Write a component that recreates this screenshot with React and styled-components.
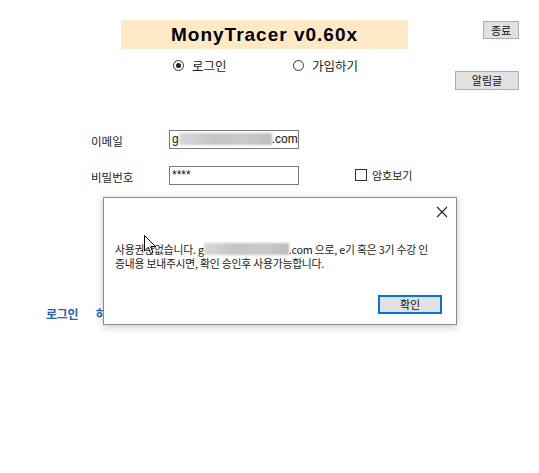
import React from "react";
import styled, { createGlobalStyle } from "styled-components";

const Global = createGlobalStyle`
  html, body { margin: 0; padding: 0; background: #fff; }
  body { font-family: "Noto Sans CJK KR", "Noto Sans", sans-serif; color: #111; }
`;

const Page = styled.div`
  position: relative;
  width: 539px;
  height: 473px;
  overflow: hidden;
  background: #fff;
  display: flex;
  flex-direction: column;
`;

const TopRow = styled.div`
  display: flex;
  align-items: flex-start;
  padding-top: 20px;
  padding-right: 20px;
`;

const TitleBox = styled.div`
  margin-left: 121px;
  width: 287px;
  height: 29px;
  background: #fde9c5;
  display: flex;
  align-items: center;
  justify-content: center;
  font-family: "Liberation Sans", Arial, sans-serif;
  font-weight: bold;
  font-size: 19px;
  color: #000;
  letter-spacing: 1px;
`;

const WinButton = styled.button`
  margin: ${(p) => p.$m || "0"};
  width: ${(p) => p.$w}px;
  height: ${(p) => p.$h}px;
  padding: 0;
  background: #e1e1e1;
  border: 1px solid ${(p) => (p.$focus ? "#0078d7" : "#adadad")};
  box-shadow: ${(p) => (p.$focus ? "inset 0 0 0 1px #0078d7" : "none")};
  font-family: "Noto Sans CJK KR", sans-serif;
  font-size: 11px;
  line-height: 1;
  color: #111;
  display: flex;
  align-items: center;
  justify-content: center;
`;

const RadioRow = styled.div`
  margin-top: 9px;
  height: 14px;
  display: flex;
  align-items: center;
  padding-left: 173px;
  gap: 60px;
`;

const RadioItem = styled.label`
  display: flex;
  align-items: center;
  gap: 8px;
  font-size: 12.5px;
  color: #222;
  width: ${(p) => p.$w}px;
`;

const RadioCircle = styled.span`
  width: 9px;
  height: 9px;
  border: 1px solid #333;
  border-radius: 50%;
  display: flex;
  align-items: center;
  justify-content: center;
  &::after {
    content: "";
    width: 5px;
    height: 5px;
    border-radius: 50%;
    background: ${(p) => (p.$on ? "#222" : "transparent")};
  }
`;

const ButtonRow = styled.div`
  margin-top: -1px;
  display: flex;
  justify-content: flex-end;
  padding-right: 20px;
`;

const FormRow = styled.div`
  display: grid;
  grid-template-columns: 78px 130px 56px auto;
  align-items: center;
  padding-left: 91px;
  margin-top: ${(p) => p.$mt}px;
`;

const Label = styled.span`
  font-size: 11.5px;
  color: #222;
  padding-top: 4px;
`;

const Input = styled.div`
  box-sizing: border-box;
  height: 19px;
  border: 1px solid #7a7a7a;
  background: #fff;
  display: flex;
  align-items: center;
  padding-left: 2px;
  font-family: "Liberation Sans", Arial, sans-serif;
  font-size: 12px;
  color: #111;
  overflow: hidden;
`;

const Blur = styled.span`
  display: inline-block;
  width: ${(p) => p.$w}px;
  height: 12px;
  background: linear-gradient(90deg, #d8d8d8, #c4c4c4 40%, #cacaca 70%, #bdbdbd);
  filter: blur(0.8px);
  flex: none;
`;

const CheckWrap = styled.label`
  grid-column: 4;
  display: flex;
  align-items: center;
  gap: 5px;
  font-size: 11px;
  color: #222;
`;

const CheckBox = styled.span`
  width: 10px;
  height: 10px;
  border: 1px solid #333;
  background: #fff;
`;

const Empty = styled.span``;

const BlueText = styled.div`
  margin-top: 120px;
  padding-left: 46px;
  font-size: 12px;
  font-weight: bold;
  color: #1d63ad;
  letter-spacing: -0.3px;
  word-spacing: 15px;
`;

const Dialog = styled.div`
  position: absolute;
  left: 103px;
  top: 197px;
  width: 354px;
  height: 128px;
  box-sizing: border-box;
  background: #fff;
  border: 1px solid #8a8a8a;
  box-shadow: 0 2px 8px rgba(0, 0, 0, 0.22);
  display: flex;
  flex-direction: column;
`;

const DialogHead = styled.div`
  height: 28px;
  display: flex;
  justify-content: flex-end;
  align-items: center;
  padding-right: 8px;
`;

const DialogText = styled.div`
  margin-top: 16px;
  padding-left: 11px;
  padding-right: 6px;
  font-size: 10.8px;
  line-height: 14px;
  color: #1a1a1a;
  letter-spacing: -0.2px;
`;

const Line = styled.div`
  display: flex;
  align-items: center;
  white-space: nowrap;
`;

const DialogFoot = styled.div`
  margin-top: auto;
  display: flex;
  justify-content: flex-end;
  padding: 0 14px 10px 0;
`;

const Cursor = styled.svg`
  position: absolute;
  left: 144px;
  top: 235px;
`;

export default function App() {
  return (
    <>
      <Global />
      <Page>
        <TopRow>
          <TitleBox>MonyTracer v0.60x</TitleBox>
          <WinButton $w={36} $h={18} $m="1px 0 0 auto">종료</WinButton>
        </TopRow>
        <RadioRow>
          <RadioItem $w={60}>
            <RadioCircle $on />
            로그인
          </RadioItem>
          <RadioItem $w={70}>
            <RadioCircle />
            가입하기
          </RadioItem>
        </RadioRow>
        <ButtonRow>
          <WinButton $w={64} $h={19}>알림글</WinButton>
        </ButtonRow>
        <FormRow $mt={39}>
          <Label>이메일</Label>
          <Input>
            g<Blur $w={93} />.com
          </Input>
        </FormRow>
        <FormRow $mt={16}>
          <Label>비밀번호</Label>
          <Input>****</Input>
          <Empty />
          <CheckWrap>
            <CheckBox />
            암호보기
          </CheckWrap>
        </FormRow>
        <BlueText>로그인 하세요</BlueText>

        <Dialog>
          <DialogHead>
            <svg width="12" height="12" viewBox="0 0 12 12">
              <path d="M1 1 L11 11 M11 1 L1 11" stroke="#222" strokeWidth="1.1" fill="none" />
            </svg>
          </DialogHead>
          <DialogText>
            <Line>
              사용권한없습니다. g<Blur $w={85} />.com 으로, e기 혹은 3기 수강 인
            </Line>
            <Line>증내용 보내주시면, 확인 승인후 사용가능합니다.</Line>
          </DialogText>
          <DialogFoot>
            <WinButton $w={64} $h={19} $focus>확인</WinButton>
          </DialogFoot>
        </Dialog>

        <Cursor width="13" height="20" viewBox="0 0 13 20">
          <path d="M0.5 0.5 L0.5 16 L4.2 12.4 L6.8 18.5 L9 17.6 L6.5 11.6 L11.5 11.6 Z" fill="#fff" stroke="#000" strokeWidth="1" strokeLinejoin="round" />
        </Cursor>
      </Page>
    </>
  );
}
